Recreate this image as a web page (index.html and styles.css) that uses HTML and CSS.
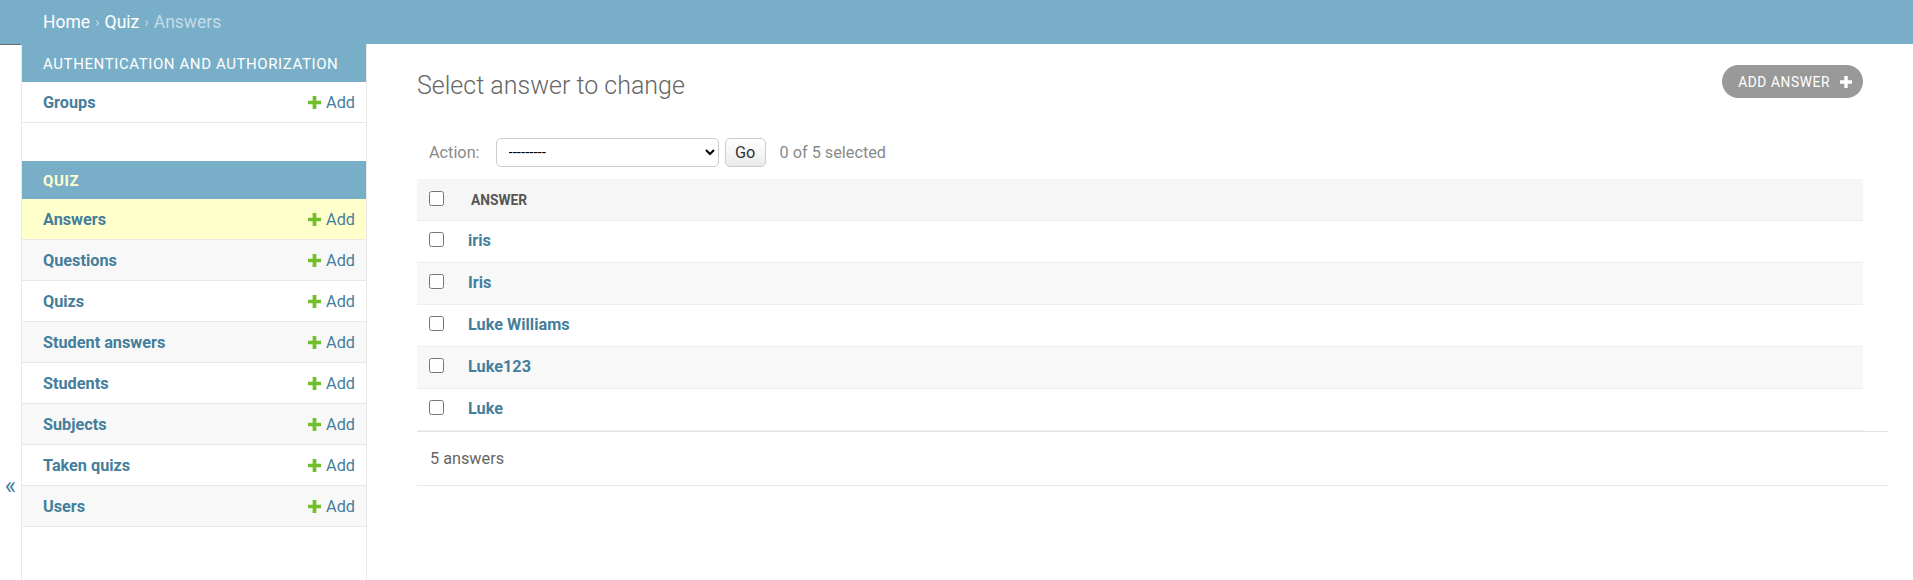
FILE: index.html
```html
<!DOCTYPE html>
<html lang="en">
<head>
<meta charset="utf-8">
<title>Select answer to change</title>
<link rel="stylesheet" href="styles.css">
</head>
<body>
<div class="breadcrumbs"><a href="#">Home</a><span class="sep">›</span><a href="#">Quiz</a><span class="sep">›</span><span class="current">Answers</span></div>
<div class="main">
  <div class="toggle"><span class="toggle-glyph">«</span></div>
  <nav class="sidebar">
    <div class="module">
      <div class="caption">Authentication and Authorization</div>
      <div class="row"><a class="model" href="#">Groups</a><a class="addlink" href="#"><svg class="plus" viewBox="0 0 14 14"><path d="M5 0h4v5h5v4H9v5H5V9H0V5h5z"/></svg>Add</a></div>
    </div>
    <div class="module">
      <div class="caption current-app">Quiz</div>
      <div class="row current"><a class="model" href="#">Answers</a><a class="addlink" href="#"><svg class="plus" viewBox="0 0 14 14"><path d="M5 0h4v5h5v4H9v5H5V9H0V5h5z"/></svg>Add</a></div>
      <div class="row even"><a class="model" href="#">Questions</a><a class="addlink" href="#"><svg class="plus" viewBox="0 0 14 14"><path d="M5 0h4v5h5v4H9v5H5V9H0V5h5z"/></svg>Add</a></div>
      <div class="row"><a class="model" href="#">Quizs</a><a class="addlink" href="#"><svg class="plus" viewBox="0 0 14 14"><path d="M5 0h4v5h5v4H9v5H5V9H0V5h5z"/></svg>Add</a></div>
      <div class="row even"><a class="model" href="#">Student answers</a><a class="addlink" href="#"><svg class="plus" viewBox="0 0 14 14"><path d="M5 0h4v5h5v4H9v5H5V9H0V5h5z"/></svg>Add</a></div>
      <div class="row"><a class="model" href="#">Students</a><a class="addlink" href="#"><svg class="plus" viewBox="0 0 14 14"><path d="M5 0h4v5h5v4H9v5H5V9H0V5h5z"/></svg>Add</a></div>
      <div class="row even"><a class="model" href="#">Subjects</a><a class="addlink" href="#"><svg class="plus" viewBox="0 0 14 14"><path d="M5 0h4v5h5v4H9v5H5V9H0V5h5z"/></svg>Add</a></div>
      <div class="row"><a class="model" href="#">Taken quizs</a><a class="addlink" href="#"><svg class="plus" viewBox="0 0 14 14"><path d="M5 0h4v5h5v4H9v5H5V9H0V5h5z"/></svg>Add</a></div>
      <div class="row even"><a class="model" href="#">Users</a><a class="addlink" href="#"><svg class="plus" viewBox="0 0 14 14"><path d="M5 0h4v5h5v4H9v5H5V9H0V5h5z"/></svg>Add</a></div>
    </div>
  </nav>
  <div class="content">
    <div class="content-head">
      <h1>Select answer to change</h1>
      <a class="object-tool" href="#">Add answer<svg class="tool-plus" viewBox="0 0 12 12"><path d="M4.3 0h3.4v4.3H12v3.4H7.7V12H4.3V7.7H0V4.3h4.3z"/></svg></a>
    </div>
    <div class="actions">
      <label class="action-label" for="action">Action:</label>
      <select id="action" class="action-select"><option>---------</option></select>
      <button class="go" type="button">Go</button>
      <span class="counter">0 of 5 selected</span>
    </div>
    <table class="results">
      <thead>
        <tr><th class="cb-col"><input type="checkbox"></th><th class="col-answer">Answer</th></tr>
      </thead>
      <tbody>
        <tr><td class="cb-col"><input type="checkbox"></td><td><a href="#">iris</a></td></tr>
        <tr class="even"><td class="cb-col"><input type="checkbox"></td><td><a href="#">Iris</a></td></tr>
        <tr><td class="cb-col"><input type="checkbox"></td><td><a href="#">Luke Williams</a></td></tr>
        <tr class="even"><td class="cb-col"><input type="checkbox"></td><td><a href="#">Luke123</a></td></tr>
        <tr><td class="cb-col"><input type="checkbox"></td><td><a href="#">Luke</a></td></tr>
      </tbody>
    </table>
    <p class="paginator">5 answers</p>
  </div>
</div>
</body>
</html>
```

FILE: styles.css
```css
html, body {
  margin: 0;
  padding: 0;
}
body {
  font-family: Roboto, "Liberation Sans", Arial, sans-serif;
  color: #333;
  background: #fff;
}
a {
  text-decoration: none;
  color: #447e9b;
}

.breadcrumbs {
  background: #79aec8;
  height: 44px;
  box-sizing: border-box;
  padding: 0 43px;
  display: flex;
  align-items: center;
  font-size: 17.5px;
  color: #c4dce8;
}
.breadcrumbs a {
  color: #fff;
}
.breadcrumbs .sep {
  margin: 0 5px;
  font-size: 15px;
}
.breadcrumbs .current {
  color: #c4dce8;
}

.main {
  display: flex;
  min-height: calc(100vh - 44px);
}

.toggle {
  flex: 0 0 21px;
  border-right: 1px solid #e8e8e8;
  border-top: 1px solid #6e6e6e;
  box-sizing: content-box;
  color: #447e9b;
  font-size: 24px;
  text-align: center;
  padding-top: 426px;
  line-height: 30px;
}

.sidebar {
  flex: 0 0 344px;
  border-right: 1px solid #e8e8e8;
}
.module {
  margin-bottom: 38px;
}
.caption {
  height: 38px;
  box-sizing: border-box;
  padding: 1px 21px 0;
  display: flex;
  align-items: center;
  background: #79aec8;
  color: #fff;
  font-size: 15px;
  letter-spacing: 0.6px;
  text-transform: uppercase;
}
.caption.current-app {
  color: #ffc;
  font-weight: 700;
}
.row {
  height: 41px;
  box-sizing: border-box;
  border-bottom: 1px solid #e8e8e8;
  display: flex;
  align-items: center;
  justify-content: space-between;
  padding: 0 11px 0 21px;
  font-size: 16.25px;
}
.row.even {
  background: #f8f8f8;
}
.row.current {
  background: #ffc;
}
.model {
  font-weight: 700;
}
.addlink {
  display: flex;
  align-items: center;
  gap: 5px;
}
.plus {
  width: 13px;
  height: 13px;
  fill: #70bf2b;
}

.content {
  flex: 1;
  min-width: 0;
  padding: 25px 50px 0 50px;
}
.content-head {
  display: flex;
  justify-content: space-between;
  align-items: flex-start;
}
h1 {
  margin: 2px 0 24px;
  font-size: 25px;
  line-height: 30px;
  font-weight: 300;
  color: #666;
}
.object-tool {
  margin-top: -4px;
  height: 33px;
  box-sizing: border-box;
  display: flex;
  align-items: center;
  gap: 10px;
  padding: 0 11px 0 16px;
  background: #999;
  color: #fff;
  border-radius: 17px;
  font-size: 13.75px;
  text-transform: uppercase;
  letter-spacing: 0.6px;
}
.tool-plus {
  width: 12px;
  height: 12px;
  fill: #fff;
}

.actions {
  display: flex;
  align-items: center;
  padding: 12.5px 12px;
  color: #8a8a8a;
  font-size: 16.25px;
}
.action-label {
  margin-right: 16px;
}
.action-select {
  width: 223px;
  height: 29px;
  box-sizing: border-box;
  border: 1px solid #ccc;
  border-radius: 5px;
  background: #fff;
  padding: 0 8px;
  font-family: Roboto, "Liberation Sans", Arial, sans-serif;
  font-size: 15px;
  color: #000;
}
.go {
  margin-left: 6px;
  width: 41px;
  height: 29px;
  box-sizing: border-box;
  border: 1px solid #ccc;
  border-radius: 5px;
  background: linear-gradient(#fff, #ebebeb);
  font-family: Roboto, "Liberation Sans", Arial, sans-serif;
  font-size: 16.25px;
  color: #333;
  padding: 0;
}
.counter {
  margin-left: 14px;
}

.results {
  width: 100%;
  border-collapse: collapse;
}
.results th {
  background: #f6f6f6;
  height: 41px;
  box-sizing: border-box;
  border-bottom: 1px solid #eee;
  text-align: left;
  font-size: 13.75px;
  font-weight: 700;
  color: #555;
  text-transform: uppercase;
  padding: 1px 0 0 15px;
}
.results td {
  height: 42px;
  box-sizing: border-box;
  border-bottom: 1px solid #eee;
  font-size: 16.25px;
  font-weight: 700;
  padding: 0 0 2px 12px;
}
.results tr.even td {
  background: #f8f8f8;
}
.results .cb-col {
  width: 39px;
  padding: 0 0 3px 12px;
  box-sizing: border-box;
}
.results th.cb-col {
  padding: 0 0 1px 12px;
}
.results input[type=checkbox] {
  width: 15px;
  height: 15px;
  margin: 0;
  display: block;
}

.paginator {
  margin: 0 -25px 0 0;
  height: 55px;
  box-sizing: border-box;
  border-top: 1px solid #e4e4e4;
  border-bottom: 1px solid #e8e8e8;
  display: flex;
  align-items: center;
  padding: 0 13px;
  font-size: 16.25px;
  color: #666;
}
```
